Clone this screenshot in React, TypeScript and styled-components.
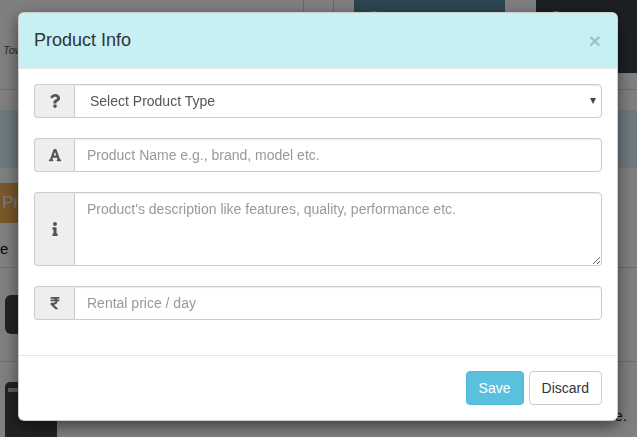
import React from "react";
import styled, { createGlobalStyle } from "styled-components";
import { FaQuestion, FaFont, FaInfo, FaRupeeSign } from "react-icons/fa";

const GlobalStyle = createGlobalStyle`
  html, body { margin: 0; padding: 0; }
  body {
    width: 637px;
    height: 437px;
    overflow: hidden;
    font-family: "Liberation Sans", Arial, sans-serif;
    font-size: 14px;
    line-height: 1.42857;
    color: #333;
    background: #fff;
  }
  * { box-sizing: border-box; }
`;

/* ---------- background page ---------- */
const Page = styled.div`
  width: 637px;
  height: 437px;
  overflow: hidden;
  background: #fff;
  display: flex;
  flex-direction: column;
`;

const TopRow = styled.div`
  height: 90px;
  flex: none;
  display: flex;
  align-items: flex-start;
  border-bottom: 1px solid #dcdcdc;
`;

const Brand = styled.div`
  width: 303px;
  height: 89px;
  padding: 43px 0 0 3px;
  font-style: italic;
  font-size: 11px;
  color: #555;
`;

const NavCell = styled.div`
  width: 31px;
  height: 89px;
  border-left: 1px solid #d0d0d0;
  border-right: 1px solid #d0d0d0;
  margin-right: 20px;
`;

const Tile = styled.div<{ $bg: string; $w: number; $h: number; $gap: number }>`
  width: ${(p) => p.$w}px;
  height: ${(p) => p.$h}px;
  margin-right: ${(p) => p.$gap}px;
  background: ${(p) => p.$bg};
  display: flex;
  padding: 11px 0 0 13px;
`;

const Avatar = styled.div`
  width: 14px;
  height: 14px;
  border-radius: 50%;
  background: #d8d8d8;
`;

const Band = styled.div`
  height: 58px;
  margin-top: 20px;
  flex: none;
  background: #d9f2fb;
`;

const OrangeButton = styled.div`
  margin-top: 15px;
  width: 150px;
  height: 40px;
  flex: none;
  background: #f0ae52;
  color: #eeeeee;
  font-size: 17px;
  padding: 8px 0 0 2px;
`;

const TextLine = styled.div`
  height: 45px;
  flex: none;
  padding: 15px 0 0 0;
  font-size: 15px;
  color: #111;
  border-bottom: 1px solid #dcdcdc;
`;

const Section = styled.div<{ $h: number }>`
  height: ${(p) => p.$h}px;
  flex: none;
  display: flex;
  justify-content: space-between;
  padding: 27px 10px 0 5px;
  border-bottom: 1px solid #dcdcdc;
`;

const DarkBlock = styled.div`
  width: 60px;
  height: 39px;
  border-radius: 6px;
  background: #444;
`;

const CardIcon = styled.div`
  width: 52px;
  height: 60px;
  margin-top: -7px;
  border-radius: 5px;
  background: #444;
  padding-top: 6px;
  &::before {
    content: "";
    display: block;
    margin-left: 3px;
    width: 40px;
    height: 4px;
    background: #bbb;
  }
`;

const SideText = styled.div`
  font-size: 15px;
  color: #111;
  padding-top: 16px;
`;

/* ---------- modal ---------- */
const Backdrop = styled.div`
  position: fixed;
  inset: 0;
  background: rgba(0, 0, 0, 0.5);
`;

const ModalLayer = styled.div`
  position: fixed;
  inset: 0;
  padding: 12px 0 0 18px;
`;

const Modal = styled.div`
  width: 600px;
  background: #fff;
  border: 1px solid rgba(0, 0, 0, 0.2);
  border-radius: 6px;
  box-shadow: 0 5px 15px rgba(0, 0, 0, 0.5);
  overflow: hidden;
`;

const Header = styled.div`
  background: #c6f0f4;
  padding: 15px 15px 14px;
  border-bottom: 1px solid #e5e5e5;
  display: flex;
  justify-content: space-between;
  align-items: flex-start;
`;

const Title = styled.h4`
  margin: 0;
  font-size: 18px;
  font-weight: 500;
  line-height: 1.42857;
  color: #333;
`;

const Close = styled.button`
  border: 0;
  background: transparent;
  padding: 0;
  margin-top: 2px;
  margin-right: 1px;
  font-family: "Liberation Sans", Arial, sans-serif;
  font-size: 21px;
  font-weight: bold;
  line-height: 1;
  color: #000;
  opacity: 0.2;
`;

const Body = styled.div`
  padding: 15px 15px 15px;
`;

const Group = styled.div`
  display: flex;
  margin-bottom: 20px;
`;

const Addon = styled.span`
  width: 40px;
  flex: none;
  display: flex;
  align-items: center;
  justify-content: center;
  background: #eee;
  border: 1px solid #ccc;
  border-right: 0;
  border-radius: 4px 0 0 4px;
  color: #555;
  font-size: 14px;
`;

const fieldBase = `
  flex: 1;
  min-width: 0;
  border: 1px solid #ccc;
  border-radius: 0 4px 4px 0;
  box-shadow: inset 0 1px 1px rgba(0, 0, 0, 0.075);
  font-family: "Liberation Sans", Arial, sans-serif;
  font-size: 14px;
  line-height: 20px;
  color: #555;
  background: #fff;
  outline: none;
  &::placeholder { color: #999; opacity: 1; }
`;

const Input = styled.input`
  ${fieldBase}
  height: 34px;
  padding: 6px 12px;
`;

const TextArea = styled.textarea`
  ${fieldBase}
  height: 74px;
  padding: 6px 12px;
  resize: vertical;
  display: block;
`;

const SelectWrap = styled.div`
  flex: 1;
  position: relative;
  display: flex;
  &::after {
    content: "";
    position: absolute;
    right: 6px;
    top: 14px;
    border-left: 3.5px solid transparent;
    border-right: 3.5px solid transparent;
    border-top: 6px solid #444;
    pointer-events: none;
  }
`;

const Select = styled.select`
  ${fieldBase}
  appearance: none;
  -webkit-appearance: none;
  height: 34px;
  padding: 6px 20px 6px 15px;
  color: #555;
`;

const Footer = styled.div`
  padding: 15px;
  border-top: 1px solid #e5e5e5;
  display: flex;
  justify-content: flex-end;
  gap: 5px;
`;

const Button = styled.button<{ $primary?: boolean }>`
  height: 34px;
  padding: 6px 12px;
  font-family: "Liberation Sans", Arial, sans-serif;
  font-size: 14px;
  line-height: 20px;
  border-radius: 4px;
  border: 1px solid ${(p) => (p.$primary ? "#46b8da" : "#ccc")};
  background: ${(p) => (p.$primary ? "#5bc0de" : "#fff")};
  color: ${(p) => (p.$primary ? "#fff" : "#333")};
`;

export default function App() {
  return (
    <>
      <GlobalStyle />
      <Page>
        <TopRow>
          <Brand>Town</Brand>
          <NavCell />
          <Tile $bg="#588aa0" $w={151} $h={60} $gap={31}>
            <Avatar />
          </Tile>
          <Tile $bg="#384048" $w={101} $h={73} $gap={0}>
            <Avatar />
          </Tile>
        </TopRow>
        <Band />
        <OrangeButton>Products</OrangeButton>
        <TextLine>e</TextLine>
        <Section $h={94}>
          <DarkBlock />
        </Section>
        <Section $h={80}>
          <CardIcon />
          <SideText>e.</SideText>
        </Section>
      </Page>
      <Backdrop />
      <ModalLayer>
        <Modal>
          <Header>
            <Title>Product Info</Title>
            <Close aria-label="Close">×</Close>
          </Header>
          <Body>
            <Group>
              <Addon>
                <FaQuestion size={14} />
              </Addon>
              <SelectWrap>
                <Select defaultValue="">
                  <option value="">Select Product Type</option>
                  <option value="car">Car</option>
                  <option value="bike">Bike</option>
                </Select>
              </SelectWrap>
            </Group>
            <Group>
              <Addon>
                <FaFont size={14} />
              </Addon>
              <Input placeholder="Product Name e.g., brand, model etc." />
            </Group>
            <Group>
              <Addon>
                <FaInfo size={14} />
              </Addon>
              <TextArea
                rows={3}
                placeholder="Product's description like features, quality, performance etc."
              />
            </Group>
            <Group>
              <Addon>
                <FaRupeeSign size={14} />
              </Addon>
              <Input placeholder="Rental price / day" />
            </Group>
          </Body>
          <Footer>
            <Button $primary>Save</Button>
            <Button>Discard</Button>
          </Footer>
        </Modal>
      </ModalLayer>
    </>
  );
}
